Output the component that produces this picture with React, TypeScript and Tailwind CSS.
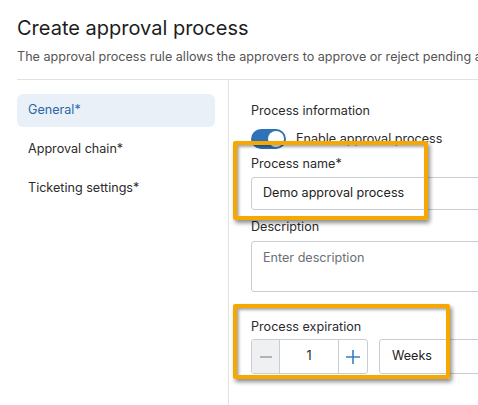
export default function App() {
  const highlight =
    "pointer-events-none absolute rounded-[2px] border-4 border-[#f6a800] shadow-[2px_3px_4px_rgba(0,0,0,0.45),inset_2px_2px_3px_rgba(0,0,0,0.35)]";

  return (
    <div className="relative h-[405px] w-[478px] overflow-hidden bg-white pl-[17px] font-['Inter',sans-serif] text-[#2b2b2b]">
      <h1 className="whitespace-nowrap pt-[14px] text-[20px] leading-[28px] text-[#1d1d1d]">Create approval process</h1>
      <p className="mt-[6px] whitespace-nowrap text-[12.6px] leading-[18px] text-[#555]">
        The approval process rule allows the approvers to approve or reject pending approval requests.
      </p>

      <div className="mt-[13px] flex h-[400px] border-t border-[#e2e2e2] text-[12.6px]">
        {/* side nav */}
        <nav className="flex w-[212px] shrink-0 flex-col gap-[6px] border-r border-[#e2e2e2] pt-[14px]">
          <div className="flex h-[33px] w-[198px] items-center rounded-md bg-[#e9f0f8] px-[11px] text-[#2a67a8]">
            General*
          </div>
          <div className="flex h-[33px] items-center px-[11px]">Approval chain*</div>
          <div className="flex h-[33px] items-center px-[11px]">Ticketing settings*</div>
        </nav>

        {/* form */}
        <section className="min-w-0 flex-1 overflow-hidden pl-[22px] pt-[22px]">
          <p className="leading-[18px]">Process information</p>

          <div className="mt-[9px] flex h-[20px] items-center gap-[10px]">
            <span className="relative h-[20px] w-[35px] shrink-0 rounded-full bg-[#2f72b8]">
              <span className="absolute right-[2px] top-[2px] h-[16px] w-[16px] rounded-full bg-white" />
            </span>
            <span className="whitespace-nowrap">Enable approval process</span>
          </div>

          <p className="mt-[6px] leading-[18px]">Process name*</p>
          <div className="mt-[4px] flex h-[33px] w-[300px] shrink-0 items-center rounded-[3px] border border-[#c9cdd2] px-[11px] text-[#222]">
            Demo approval process
          </div>

          <p className="mt-[8px] leading-[18px]">Description</p>
          <div className="mt-[5px] h-[51px] w-[300px] rounded-[3px] border border-[#c9cdd2] px-[11px] pt-[7px] leading-[18px] text-[#6b7075]">
            Enter description
          </div>

          <p className="mt-[26px] leading-[18px]">Process expiration</p>
          <div className="mt-[3px] flex h-[35px] w-[400px] items-stretch gap-[11px]">
            <div className="flex w-[117px] shrink-0 overflow-hidden rounded-[3px] border border-[#c9cdd2]">
              <span className="flex w-[28px] shrink-0 items-center justify-center border-r border-[#c9cdd2] bg-[#eef0f2]">
                <svg width="12" height="12" viewBox="0 0 12 12">
                  <path d="M0 6h12" stroke="#9aa0a6" strokeWidth="1.3" />
                </svg>
              </span>
              <span className="flex flex-1 items-center justify-center text-[#222]">1</span>
              <span className="flex w-[29px] shrink-0 items-center justify-center border-l border-[#c9cdd2]">
                <svg width="14" height="14" viewBox="0 0 14 14">
                  <path d="M0 7h14M7 0v14" stroke="#3a7dc2" strokeWidth="1.6" />
                </svg>
              </span>
            </div>
            <div className="flex w-[200px] shrink-0 items-center rounded-[3px] border border-[#c9cdd2] px-[12px] text-[#222]">
              Weeks
            </div>
          </div>
        </section>
      </div>

      <div className={`${highlight} left-[233px] top-[141px] h-[79px] w-[195px]`} />
      <div className={`${highlight} left-[233px] top-[304px] h-[75px] w-[217px]`} />
    </div>
  );
}
